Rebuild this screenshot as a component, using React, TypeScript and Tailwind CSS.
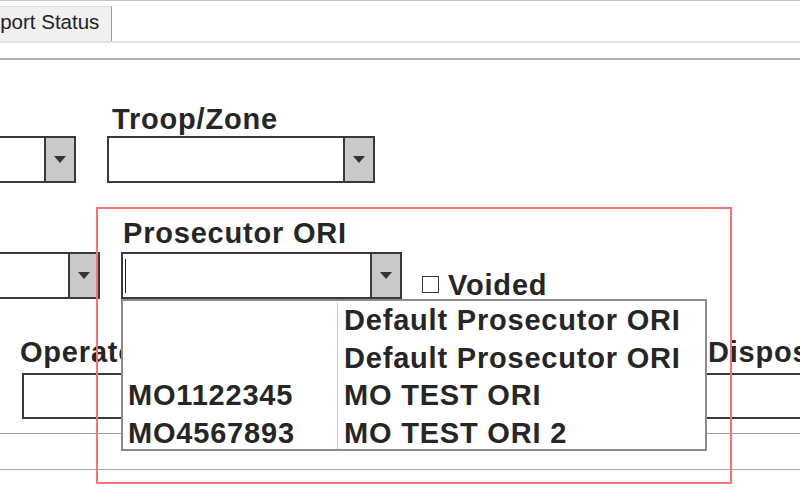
import React from 'react';

const Arrow = () => (
  <svg width="12" height="7" viewBox="0 0 12 7">
    <path d="M0 0h12L6 7z" fill="#333" />
  </svg>
);

function Select({ className = '', cursor = false }: { className?: string; cursor?: boolean }) {
  return (
    <div className={`flex h-[47px] shrink-0 border-2 border-[#3a3a3a] bg-white ${className}`}>
      <div className="flex flex-1 items-center pl-[2px]">
        {cursor && <span className="h-[34px] w-px bg-[#222]" />}
      </div>
      <div className="flex w-[30px] items-center justify-center border-l-2 border-[#3a3a3a] bg-[#c9c9c9]">
        <Arrow />
      </div>
    </div>
  );
}

const label = "text-[29px] leading-[27px] font-bold tracking-[0.8px] text-[#262626] whitespace-nowrap";

const ORIS = [
  { code: '', name: 'Default Prosecutor ORI' },
  { code: '', name: 'Default Prosecutor ORI' },
  { code: 'MO1122345', name: 'MO TEST ORI' },
  { code: 'MO4567893', name: 'MO TEST ORI 2' },
];

export default function App() {
  return (
    <div className="relative h-[491px] w-[800px] overflow-hidden bg-white font-['Liberation_Sans',Arial,sans-serif]">
      {/* tab strip */}
      <div className="h-px bg-[#c4c4c4]" />
      <div className="flex h-[42px] items-end border-b-2 border-[#e2e2e2]">
        <div className="-ml-[36px] h-[35px] border-t border-r border-t-[#dcdcdc] border-r-[#9a9a9a] bg-[#f0f0f0] pl-[10px] pr-[12px] pt-[3px] text-[20.5px] leading-[24px] text-[#222] whitespace-nowrap">
          Report Status
        </div>
      </div>
      <div className="mt-[15px] h-[2px] bg-[#b2b2b2]" />

      {/* row 1 */}
      <div className="mt-[46px] flex items-end gap-[31px]">
        <Select className="-ml-[124px] w-[200px]" />
        <div className="flex flex-col">
          <div className={`${label} pl-[5px]`}>Troop/Zone</div>
          <Select className="mt-[3px] w-[268px]" />
        </div>
      </div>

      {/* row 2 */}
      <div className="mt-[37px] flex items-end">
        <Select className="-ml-[100px] w-[200px]" />
        <div className="ml-[21px] flex flex-col">
          <div className={`${label} pl-[2px]`}>Prosecutor ORI</div>
          <Select className="mt-[5px] w-[281px]" cursor />
        </div>
        <div className="mb-[6px] ml-[20px] h-[17px] w-[17px] border-[1.5px] border-[#3a3a3a]" />
        <div className={`${label} ml-[9px]`}>Voided</div>
      </div>

      {/* row 3 */}
      <div className="mt-[40px] flex">
        <div className="ml-[20px] flex w-[204px] flex-col">
          <div className={label}>Operator</div>
          <div className="ml-[2px] mt-[7px] h-[46px] w-[202px] border-2 border-[#3a3a3a]" />
        </div>
        <div className="ml-[480px] flex flex-col">
          <div className={`${label} pl-[4px]`}>Disposition</div>
          <div className="mt-[7px] h-[46px] w-[200px] border-2 border-[#3a3a3a]" />
        </div>
      </div>

      <div className="mt-[14px] h-px bg-[#a0a0a0]" />
      <div className="mt-[35px] h-px bg-[#a8a8a8]" />

      {/* open dropdown list */}
      <div className="absolute left-[121px] top-[299px] flex h-[152px] w-[586px] border-2 border-[#8c8c8c] bg-white pt-px">
        <div className="w-[215px] border-r border-[#c8c8c8]">
          {ORIS.map((o, i) => (
            <div key={i} className={`${label} h-[37.5px] pl-[5px] leading-[37.5px]`}>
              {o.code}
            </div>
          ))}
        </div>
        <div className="flex-1">
          {ORIS.map((o, i) => (
            <div key={i} className={`${label} h-[37.5px] pl-[6px] leading-[37.5px]`}>
              {o.name}
            </div>
          ))}
        </div>
      </div>

      {/* highlight frame */}
      <div className="pointer-events-none absolute left-[96px] top-[207px] h-[277px] w-[636px] border-2 border-[#f47474]" />
    </div>
  );
}
